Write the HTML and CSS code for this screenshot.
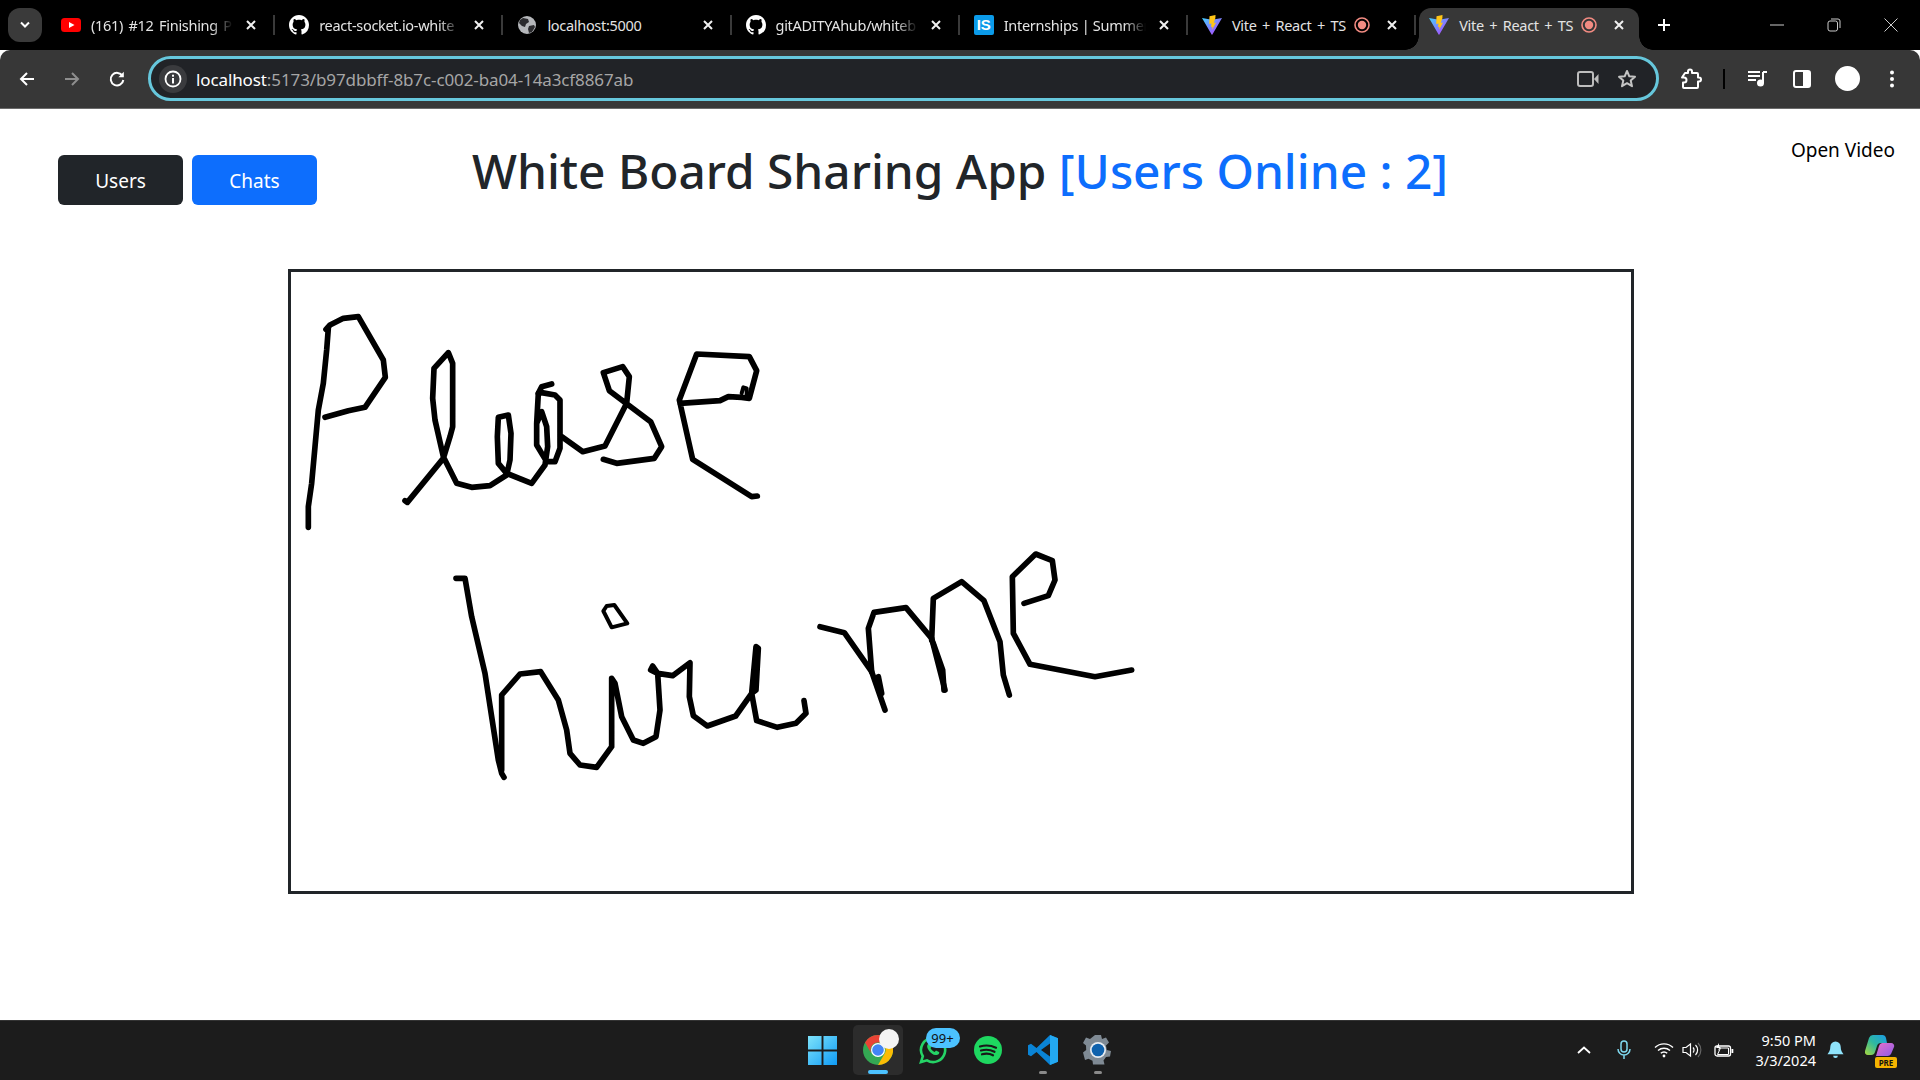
FILE: index.html
```html
<!DOCTYPE html>
<html lang="en">
<head>
<meta charset="utf-8">
<title>Vite + React + TS</title>
<link rel="stylesheet" href="styles.css">
</head>
<body>
<div class="tabstrip">
  <button class="tabsearch"><svg width="12" height="8" viewBox="0 0 12 8"><path d="M2 1.500 6 5.500 10 1.500" fill="none" stroke="#fff" stroke-width="2"/></svg></button>
  <div class="tab">
    <svg class="favicon" viewBox="0 0 20 20"><rect y="3" width="20" height="14" rx="3.500" fill="#f00"/><path d="M8 7l5.500 3L8 13z" fill="#fff"/></svg>
    <span class="tabtitle">(161) #12 Finishing Pr</span>
    <span class="tabclose"><svg viewBox="0 0 12 12"><path d="M2 2l8 8M10 2l-8 8"/></svg></span>
  </div>
  <div class="tab">
    <svg class="favicon" viewBox="0 0 16 16"><path fill="#fff" d="M8 0C3.580 0 0 3.580 0 8c0 3.540 2.290 6.530 5.470 7.590.4.070.55-.17.55-.38 0-.19-.01-.82-.01-1.490-2.010.37-2.530-.49-2.690-.94-.09-.23-.48-.94-.82-1.130-.28-.15-.68-.52-.01-.53.63-.01 1.080.58 1.230.82.720 1.210 1.870.87 2.330.66.070-.52.280-.87.510-1.070-1.780-.2-3.640-.89-3.640-3.950 0-.87.310-1.590.820-2.150-.08-.2-.36-1.020.08-2.120 0 0 .67-.21 2.200.820.640-.18 1.320-.27 2-.27s1.360.09 2 .27c1.530-1.040 2.200-.82 2.200-.82.440 1.100.160 1.920.080 2.120.510.560.820 1.270.820 2.150 0 3.070-1.870 3.750-3.650 3.950.290.250.540.730.540 1.480 0 1.070-.01 1.930-.01 2.200 0 .21.150.46.550.38A8.010 8.010 0 0 0 16 8c0-4.420-3.580-8-8-8z"/></svg>
    <span class="tabtitle">react-socket.io-white</span>
    <span class="tabclose"><svg viewBox="0 0 12 12"><path d="M2 2l8 8M10 2l-8 8"/></svg></span>
  </div>
  <div class="tab">
    <svg class="favicon" viewBox="0 0 20 20"><circle cx="10" cy="10" r="9" fill="#b5b7ba"/><path d="M6 3l5 1 1 3-3 2-1 3-3-1-3-3 1-3zM12 11l5-1 1 2-3 5-3 1-1-4z" fill="#2b2b2e"/></svg>
    <span class="tabtitle tabtitle-full">localhost:5000</span>
    <span class="tabclose"><svg viewBox="0 0 12 12"><path d="M2 2l8 8M10 2l-8 8"/></svg></span>
  </div>
  <div class="tab">
    <svg class="favicon" viewBox="0 0 16 16"><path fill="#fff" d="M8 0C3.580 0 0 3.580 0 8c0 3.540 2.290 6.530 5.470 7.590.4.070.55-.17.55-.38 0-.19-.01-.82-.01-1.490-2.010.37-2.530-.49-2.690-.94-.09-.23-.48-.94-.82-1.130-.28-.15-.68-.52-.01-.53.63-.01 1.080.58 1.230.82.720 1.210 1.870.87 2.330.66.070-.52.280-.87.510-1.070-1.780-.2-3.640-.89-3.640-3.950 0-.87.310-1.590.820-2.150-.08-.2-.36-1.020.08-2.120 0 0 .67-.21 2.200.820.640-.18 1.320-.27 2-.27s1.360.09 2 .27c1.530-1.040 2.200-.82 2.200-.82.440 1.100.160 1.920.080 2.120.510.560.820 1.270.820 2.150 0 3.070-1.870 3.750-3.650 3.950.290.250.540.730.540 1.480 0 1.070-.01 1.930-.01 2.200 0 .21.150.46.550.38A8.010 8.010 0 0 0 16 8c0-4.420-3.580-8-8-8z"/></svg>
    <span class="tabtitle">gitADITYAhub/whiteb</span>
    <span class="tabclose"><svg viewBox="0 0 12 12"><path d="M2 2l8 8M10 2l-8 8"/></svg></span>
  </div>
  <div class="tab">
    <span class="is-icon">IS</span>
    <span class="tabtitle tabtitle-tight">Internships | Summer</span>
    <span class="tabclose"><svg viewBox="0 0 12 12"><path d="M2 2l8 8M10 2l-8 8"/></svg></span>
  </div>
  <div class="tab">
    <svg class="favicon" viewBox="0 0 20 20"><defs><linearGradient id="vitea" x1="0" y1="0" x2="1" y2="1"><stop offset="0" stop-color="#41d1ff"/><stop offset="1" stop-color="#bd34fe"/></linearGradient></defs><path d="M0 3l10 1.800L20 3 10.400 19.500a.5.5 0 0 1-.8 0z" fill="url(#vitea)"/><path d="M13.500 0 7.500 1.300 7.200 9l2.300-.4-.5 3.300 1.400-.2-.3 3 4-7.200-2.300.5 1.600-5z" fill="#ffc517"/></svg>
    <span class="tabtitle tabtitle-full">Vite + React + TS</span>
    <svg class="rec" viewBox="0 0 16 16"><circle cx="8" cy="8" r="7" fill="none" stroke="#f28b82" stroke-width="1.600"/><circle cx="8" cy="8" r="4.200" fill="#f28b82"/></svg>
    <span class="tabclose"><svg viewBox="0 0 12 12"><path d="M2 2l8 8M10 2l-8 8"/></svg></span>
  </div>
  <div class="tab tab-active">
    <svg class="favicon" viewBox="0 0 20 20"><path d="M0 3l10 1.800L20 3 10.400 19.500a.5.5 0 0 1-.8 0z" fill="url(#vitea)"/><path d="M13.500 0 7.500 1.300 7.200 9l2.300-.4-.5 3.300 1.400-.2-.3 3 4-7.200-2.300.5 1.600-5z" fill="#ffc517"/></svg>
    <span class="tabtitle tabtitle-full">Vite + React + TS</span>
    <svg class="rec" viewBox="0 0 16 16"><circle cx="8" cy="8" r="7" fill="none" stroke="#f28b82" stroke-width="1.600"/><circle cx="8" cy="8" r="4.200" fill="#f28b82"/></svg>
    <span class="tabclose"><svg viewBox="0 0 12 12"><path d="M2 2l8 8M10 2l-8 8"/></svg></span>
  </div>
  <span class="newtab"><svg width="14" height="14" viewBox="0 0 14 14"><path d="M7 1v12M1 7h12" stroke="#fff" stroke-width="2"/></svg></span>
  <div class="winctrls">
    <svg class="winbtn" viewBox="0 0 14 14"><path d="M0 7h14" stroke="#ccc" stroke-width="1"/></svg>
    <svg class="winbtn" viewBox="0 0 14 14"><rect x="1" y="3" width="9.500" height="10" rx="2" fill="none" stroke="#ccc"/><path d="M4 1h7a2 2 0 0 1 2 2v7" fill="none" stroke="#ccc"/></svg>
    <svg class="winbtn" viewBox="0 0 14 14"><path d="M.5.500l13 13M13.500.500l-13 13" stroke="#ccc"/></svg>
  </div>
</div>

<div class="toolbar">
  <div class="navbtns">
    <svg class="tbicon" viewBox="0 0 18 18"><path d="M16 9H3M9 3 3 9l6 6" fill="none" stroke="#fff" stroke-width="2"/></svg>
    <svg class="tbicon" viewBox="0 0 18 18"><path d="M2 9h13M9 3l6 6-6 6" fill="none" stroke="#8e8e8e" stroke-width="2"/></svg>
    <svg class="tbicon" viewBox="0 0 18 18"><path d="M14.500 6A6.300 6.300 0 1 0 15.300 10" fill="none" stroke="#fff" stroke-width="2"/><path d="M15.800 1.800v5.400h-5.400z" fill="#fff"/></svg>
  </div>
  <div class="omnibox">
    <span class="infochip"><svg width="18" height="18" viewBox="0 0 18 18"><circle cx="9" cy="9" r="7.500" fill="none" stroke="#fff" stroke-width="1.800"/><rect x="8" y="8" width="2" height="5.500" fill="#fff"/><rect x="8" y="4.700" width="2" height="2" fill="#fff"/></svg></span>
    <span class="url"><span class="url-host">localhost</span>:5173/b97dbbff-8b7c-c002-ba04-14a3cf8867ab</span>
    <svg class="omni-cam" viewBox="0 0 22 18"><rect x="1" y="2" width="15" height="14" rx="2" fill="none" stroke="#bdbdbd" stroke-width="2"/><path d="M17 9l4.500-5v10z" fill="#bdbdbd"/></svg>
    <svg class="omni-star" viewBox="0 0 20 20"><path d="M10 2l2.300 5.300 5.700.5-4.300 3.800 1.300 5.600-5-3-5 3 1.300-5.600L2 7.800l5.700-.5z" fill="none" stroke="#c4c4c4" stroke-width="2" stroke-linejoin="round"/></svg>
  </div>
  <div class="tbright">
    <svg class="ext" viewBox="0 0 22 22"><path d="M8 3.500a2 2 0 0 1 4 0V5h5a1 1 0 0 1 1 1v3.500h1a2 2 0 0 1 0 4h-1V19a1 1 0 0 1-1 1H4a1 1 0 0 1-1-1v-4.500h1a2.500 2.500 0 0 0 0-5H2L5 5h3z" fill="none" stroke="#fff" stroke-width="2" stroke-linejoin="round"/></svg>
    <span class="tbsep"></span>
    <svg class="media" viewBox="0 0 20 18"><path d="M0 2h12M0 6h12M0 10h8" stroke="#fff" stroke-width="2"/><path d="M15 2h4M15 2v11" stroke="#fff" stroke-width="2" fill="none"/><circle cx="12.500" cy="13" r="3.500" fill="#fff"/></svg>
    <svg class="panel" viewBox="0 0 18 18"><rect x="1" y="1" width="16" height="16" rx="2" fill="none" stroke="#fff" stroke-width="2"/><rect x="10" y="1" width="7" height="16" fill="#fff"/></svg>
    <span class="avatar"></span>
    <svg class="kebab" viewBox="0 0 4 18"><circle cx="2" cy="2.500" r="2" fill="#fff"/><circle cx="2" cy="9" r="2" fill="#fff"/><circle cx="2" cy="15.500" r="2" fill="#fff"/></svg>
  </div>
</div>

<main class="page">
  <header class="apphead">
    <div class="btngroup">
      <button class="btn btn-dark">Users</button>
      <button class="btn btn-primary">Chats</button>
    </div>
    <h1 class="apptitle">White Board Sharing App <span class="online">[Users Online : 2]</span></h1>
    <div class="videolink">Open Video</div>
  </header>
  <div class="board">
    <svg class="drawing" viewBox="291 272 1340 619">
      <g transform="translate(280 260) scale(.33333)" class="ink">
        <polyline points="85,802 85,740 95,670 105,560 115,450 130,370 140,270 145,205"/>
        <polyline points="138,208 150,195 190,175 235,170 310,300 316,352 255,442 205,452 135,472"/>
        <polyline points="375,722 382,727 490,595 510,530 518,500 518,310 505,278 462,325 458,415 465,480 490,590 510,630 530,670 575,682 630,677 680,645 690,600 693,520 685,465 655,472 652,530 655,610 680,640 755,670 795,615 803,560 800,500 785,455 770,490 770,555 800,605 825,605 840,565 840,420 825,405 785,398 775,400 770,490"/>
        <polyline points="775,400 785,380 815,372"/>
        <polyline points="845,530 908,575 975,558 1040,430 1048,350 1028,320 970,338 988,392 1112,485 1145,560 1123,595 1010,610 970,598"/>
        <polyline points="1200,430 1320,422 1345,410 1385,412 1408,415 1430,332 1408,290 1250,282 1198,420 1238,598 1415,710 1432,708"/>
        <polyline class="ink-fine" points="1385,400 1390,382 1400,385 1400,405"/>
      </g>
      <g transform="translate(430 540) scale(.33333)" class="ink">
        <polyline points="78,115 105,115 125,230 165,400 205,660 215,700 222,712"/>
        <polyline points="215,690 215,465 270,402 332,395 385,480 410,570 420,640 450,675 500,682 545,620 545,415 555,430 575,530 610,600 640,610 678,590 690,510 683,400 662,390 668,378 683,400 728,407 780,368 778,470 790,527 832,558 917,528 965,460 978,320 985,325 978,450 965,460 980,542 1042,562 1098,550 1128,520 1122,482"/>
        <polygon class="ink-fine" points="520,213 530,198 553,195 592,250 545,262"/>
      </g>
      <g transform="translate(800 530) scale(.33333)" class="ink">
        <polyline points="60,290 133,308 215,425 255,540"/>
        <polyline points="235,440 245,490"/>
        <polyline points="215,425 205,295 222,247 318,233 395,325 435,480"/>
        <polyline points="395,330 400,205 485,155 552,212 600,335 610,435 628,495"/>
        <polyline points="400,340 428,420 432,480"/>
        <polyline points="672,220 745,197 765,150 757,92 707,72 637,140 640,310 690,403 885,440 995,420"/>
      </g>
    </svg>
  </div>
</main>

<footer class="taskbar">
  <div class="tb-spacer"></div>
  <div class="tb-apps">
    <span class="app app-win"><svg width="29" height="29" viewBox="0 0 30 30"><defs><linearGradient id="wing" x1="0" y1="0" x2="1" y2="1"><stop offset="0" stop-color="#7ee3fb"/><stop offset="1" stop-color="#0f9bf5"/></linearGradient></defs><path d="M0 0h14v14H0zM16 0h14v14H16zM0 16h14v14H0zM16 16h14v14H16z" fill="url(#wing)"/></svg></span>
    <span class="app app-chrome">
      <svg width="30" height="30" viewBox="0 0 30 30"><circle cx="15" cy="15" r="15" fill="#34a853"/><path d="M15 0a15 15 0 0 1 13 7.500H15a7.500 7.500 0 0 0-6.500 11.200L2 7.500A15 15 0 0 1 15 0z" fill="#ea4335"/><path d="M28 7.500A15 15 0 0 1 15 30l6.500-11.200A7.500 7.500 0 0 0 21.500 11z" fill="#fbbc04"/><circle cx="15" cy="15" r="7" fill="#fff"/><circle cx="15" cy="15" r="5.800" fill="#4285f4"/></svg>
      <span class="chrome-dot"></span>
      <span class="active-bar"></span>
    </span>
    <span class="app app-wa">
      <svg width="28" height="28" viewBox="0 0 28 28"><path d="M14 2a12 12 0 0 0-10.200 18.300L2 26l6-1.700A12 12 0 1 0 14 2z" fill="none" stroke="#25d366" stroke-width="2.600"/><path d="M9 8c-1 1-1.500 3 .5 6s5 5.500 8 5 3-2.500 2.500-3l-3-1.500-1.300 1.500c-2-.8-3.500-2.300-4.200-4l1.200-1.300L11 8z" fill="#25d366"/></svg>
      <span class="wa-badge">99+</span>
    </span>
    <span class="app app-spot"><svg width="28" height="28" viewBox="0 0 28 28"><circle cx="14" cy="14" r="14" fill="#1ed760"/><path d="M6 10.500c5-1.500 11-1.200 16 1.200M7 14.500c4.500-1.200 9.500-.8 13.500 1.300M8 18.300c4-1 8-.6 11 1" fill="none" stroke="#191919" stroke-width="2.200" stroke-linecap="round"/></svg></span>
    <span class="app app-code"><svg width="30" height="30" viewBox="0 0 30 30"><path d="M22 0 8.500 13 3 8.700 0 10.200v9.600l3 1.500 5.500-4.300L22 30l8-3.200V3.200zM22 8.500v13L13 15z" fill="#0a84d6" fill-rule="evenodd"/><path d="M22 0l8 3.200v23.600L22 30z" fill="#23a9f2"/></svg><span class="dot"></span></span>
    <span class="app app-set"><svg width="30" height="30" viewBox="0 0 30 30"><path d="M12 0h6l1 4 4-1.500 3 5-3 3 .8 4.500 4.200 1-1 5.500-4 .5-2.500 3.500 1 4H10l-.5-3.700-4-2-3.500 1.200L0 17.500l3.200-2.500-.2-4.500L0 8l3-5.500 4 1.500z" fill="#7f8a94"/><circle cx="15" cy="15" r="8" fill="#e8edf2"/><circle cx="15" cy="15" r="6.300" fill="#0f62ad"/></svg><span class="dot"></span></span>
  </div>
  <div class="tray">
    <svg class="t-chev" viewBox="0 0 14 8"><path d="M1 7l6-5.500L13 7" fill="none" stroke="#fff" stroke-width="1.800"/></svg>
    <svg class="t-mic" viewBox="0 0 14 20"><rect x="4" y="1" width="6" height="11" rx="3" fill="none" stroke="#7fd8ee" stroke-width="1.500"/><path d="M1 9a6 6 0 0 0 12 0M7 15v4" fill="none" stroke="#7fd8ee" stroke-width="1.500"/></svg>
    <svg class="t-wifi" viewBox="0 0 20 16"><path d="M1 5.500a13 13 0 0 1 18 0M4 8.500a9 9 0 0 1 12 0M6.800 11.300a4.500 4.500 0 0 1 6.400 0" fill="none" stroke="#fff" stroke-width="1.400"/><circle cx="10" cy="14" r="1.400" fill="#fff"/></svg>
    <svg class="t-vol" viewBox="0 0 20 16"><path d="M1 5.500h3L8.500 2v12L4 10.500H1z" fill="none" stroke="#fff" stroke-width="1.200"/><path d="M11 5.500a3.500 3.500 0 0 1 0 5M13.500 3a7 7 0 0 1 0 10" fill="none" stroke="#fff" stroke-width="1.200"/><path d="M16 1a10 10 0 0 1 0 14" fill="none" stroke="#666" stroke-width="1.200"/></svg>
    <svg class="t-bat" viewBox="0 0 20 14"><rect x="1" y="3" width="15.500" height="10" rx="2" fill="none" stroke="#fff" stroke-width="1.300"/><path d="M3.500 11.500 6.500 5h8v6.500z" fill="none" stroke="#fff"/><rect x="17.500" y="6" width="1.800" height="4" fill="#fff"/><path d="M5 0 2 5h3l-1 3 3-4H5z" fill="#fff"/></svg>
    <div class="clock"><div>9:50 PM</div><div>3/3/2024</div></div>
    <svg class="t-bell" viewBox="0 0 18 20"><path d="M9 1a5.500 5.500 0 0 0-5.500 5.500c0 4-1.500 6-3 8h17c-1.500-2-3-4-3-8A5.500 5.500 0 0 0 9 1z" fill="#8fe3fb"/><path d="M6.500 16a2.500 2.500 0 0 0 5 0z" fill="#8fe3fb"/></svg>
    <span class="copilot">
      <svg width="30" height="24" viewBox="0 0 30 24"><defs><linearGradient id="copa" x1="0" y1="1" x2="1" y2="0"><stop offset="0" stop-color="#a8d83c"/><stop offset=".5" stop-color="#2fb8a0"/><stop offset="1" stop-color="#1a9be8"/></linearGradient><linearGradient id="copb" x1="0" y1="0" x2="1" y2="1"><stop offset="0" stop-color="#e86fc8"/><stop offset="1" stop-color="#8d5de8"/></linearGradient></defs><path d="M9 0h8a4 4 0 0 1 4 3l1 5h-6a4 4 0 0 0-4 3l-2 6a4 4 0 0 1-4 3H3a3 3 0 0 1-3-4l4-13a5 5 0 0 1 5-3z" fill="url(#copa)"/><path d="M17 8h9a3 3 0 0 1 3 4l-3 7a4 4 0 0 1-4 2H11l3-10a4 4 0 0 1 3-3z" fill="url(#copb)"/></svg>
      <span class="pre">PRE</span>
    </span>
  </div>
</footer>
</body>
</html>
```
FILE: styles.css
```css
* { box-sizing: border-box; }
html, body { margin: 0; height: 100%; }
body {
  display: flex;
  flex-direction: column;
  height: 100vh;
  overflow: hidden;
  background: #fff;
  font-family: "Noto Sans", "Open Sans", sans-serif;
}
svg { display: block; flex: none; }

/* tab strip */
.tabstrip {
  height: 50px;
  background: #000;
  display: flex;
  align-items: flex-start;
  flex: none;
}
.tabsearch {
  width: 34px;
  height: 34px;
  margin: 8px 4px 0 8px;
  border: 0;
  padding: 0;
  border-radius: 12px;
  background: #3a3a3a;
  display: flex;
  align-items: center;
  justify-content: center;
}
.tab {
  width: 228.200px;
  height: 34px;
  margin-top: 8px;
  padding: 0 15px;
  display: flex;
  align-items: center;
  position: relative;
  color: #e3e3e3;
  font-size: 14.500px;
  letter-spacing: -.3px;
  word-spacing: 2px;
}
.tab::after {
  content: "";
  position: absolute;
  right: -1px;
  top: 7px;
  height: 20px;
  width: 2px;
  background: #3a3a3a;
}
.tab-active {
  width: 220px;
  margin-left: 4px;
  margin-right: 3px;
  height: 42px;
  padding: 0 12px 8px 10px;
  background: #373737;
  border-radius: 12px 12px 0 0;
}
.tab-active::after {
  right: -14px;
  top: auto;
  bottom: 0;
  width: 14px;
  height: 14px;
  background: radial-gradient(circle at 100% 0, #000 13.500px, #373737 14px);
}
.tab-active::before {
  content: "";
  position: absolute;
  left: -14px;
  bottom: 0;
  width: 14px;
  height: 14px;
  background: radial-gradient(circle at 0 0, #000 13.500px, #373737 14px);
}
.favicon { width: 20px; height: 20px; margin-right: 10px; }
.is-icon {
  width: 20px;
  height: 20px;
  margin-right: 10px;
  background: #0b9bea;
  border-radius: 2px;
  color: #fff;
  font-family: "Liberation Sans", sans-serif;
  font-weight: 700;
  font-size: 15px;
  letter-spacing: 0;
  line-height: 20px;
  text-align: center;
  flex: none;
}
.tabtitle {
  flex: 1;
  min-width: 0;
  white-space: nowrap;
  -webkit-mask-image: linear-gradient(to left, transparent 4px, #000 26px);
  mask-image: linear-gradient(to left, transparent 4px, #000 26px);
}
.tabtitle-full { -webkit-mask-image: none; mask-image: none; }
.tabtitle-tight { word-spacing: 0; }
.tabclose { width: 16px; height: 16px; padding: 2px; flex: none; margin-left: 6px; }
.tabclose svg { width: 12px; height: 12px; }
.tabclose path { stroke: #f0f0f0; stroke-width: 2; fill: none; }
.rec { width: 16px; height: 16px; margin-right: 8px; }
.newtab { margin: 18px 0 0 15px; }
.winctrls { margin-left: auto; display: flex; margin-top: 18px; margin-right: 22px; gap: 43px; }
.winbtn { width: 14px; height: 14px; }

/* toolbar */
.toolbar {
  height: 59px;
  flex: none;
  background: #373737;
  border-bottom: 1px solid #6b6b6b;
  border-radius: 10px 10px 0 0;
  display: flex;
  align-items: center;
  padding: 0 20px 1px 18px;
}
.navbtns { display: flex; gap: 27px; width: 132px; margin-right: -2px; }
.tbicon { width: 18px; height: 18px; }
.omnibox {
  width: 1511px;
  height: 45px;
  border: 3px solid #66c7dc;
  border-radius: 23px;
  background: #212327;
  display: flex;
  align-items: center;
  padding: 0 19px 0 8px;
}
.infochip {
  width: 28px;
  height: 28px;
  border-radius: 50%;
  background: #3a3b3e;
  display: flex;
  align-items: center;
  justify-content: center;
  margin-right: 9px;
}
.url { flex: 1; color: #a6a6a6; font-size: 17px; letter-spacing: -.11px; white-space: nowrap; margin-top: 1px; }
.url-host { color: #fff; }
.omni-cam { width: 22px; height: 18px; margin-right: 18px; }
.omni-star { width: 20px; height: 20px; }
.tbright { display: flex; align-items: center; margin-left: 21px; }
.ext { width: 22px; height: 22px; }
.tbsep { width: 2px; height: 20px; background: #000; margin: 0 23px 0 21px; }
.media { width: 20px; height: 18px; margin-right: 25px; }
.panel { width: 18px; height: 18px; margin-right: 24px; }
.avatar { width: 25px; height: 25px; border-radius: 50%; background: #fff; margin-right: 30px; }
.kebab { width: 4px; height: 18px; }

/* page */
.page { flex: 1; min-height: 0; background: #fff; }
.apphead {
  display: grid;
  grid-template-columns: 1fr auto 1fr;
  padding: 0 25px;
  height: 160px;
}
.btngroup { display: flex; gap: 9px; margin-top: 46px; padding-left: 33px; align-self: start; }
.btn {
  width: 125px;
  height: 50px;
  border: 0;
  padding: 2px 0 0;
  border-radius: 6px;
  color: #fff;
  font: 19px "Noto Sans", sans-serif;
}
.btn-dark { background: #212529; }
.btn-primary { background: #0d6efd; }
.apptitle {
  margin: 33px 0 0;
  color: #212529;
  font-size: 47.800px;
  font-weight: 500;
  line-height: 1.200;
  white-space: nowrap;
  justify-self: center;
}
.online { color: #0d6efd; }
.videolink { justify-self: end; margin-top: 28px; font-size: 19px; color: #000; line-height: 26px; }
.board {
  width: 1346px;
  height: 625px;
  margin-left: 288px;
  border: 3px solid #212529;
  background: #fff;
}
.drawing { width: 100%; height: 100%; }
.ink polyline, .ink polygon {
  fill: none;
  stroke: #000;
  stroke-width: 17;
  stroke-linecap: round;
  stroke-linejoin: round;
}
.ink .ink-fine { stroke-width: 12; }

/* taskbar */
.taskbar {
  height: 60px;
  flex: none;
  background: #1c1c1c;
  border-top: 1px solid #333;
  padding-bottom: 1px;
  display: grid;
  grid-template-columns: 1fr auto 1fr;
  align-items: center;
}
.tb-apps { display: flex; align-items: center; padding-left: 5px; }
.app {
  position: relative;
  width: 50px;
  height: 50px;
  margin-right: 5px;
  display: flex;
  align-items: center;
  justify-content: center;
}
.app-chrome { background: #2c2c2c; border-radius: 5px; }
.chrome-dot { position: absolute; left: 26px; top: 4px; width: 20px; height: 20px; border-radius: 50%; background: #f4f4f4; }
.active-bar { position: absolute; left: 15px; bottom: 1px; width: 20px; height: 4px; border-radius: 2px; background: #4cc2ff; }
.wa-badge {
  position: absolute;
  left: 18px;
  top: 3px;
  width: 34px;
  height: 20px;
  border-radius: 10px;
  background: #4cc2ff;
  color: #111;
  font-size: 13px;
  line-height: 20px;
  text-align: center;
}
.dot { position: absolute; left: 21px; bottom: 1px; width: 8px; height: 3px; border-radius: 2px; background: #8a8a8a; }
.tray { display: flex; align-items: center; justify-self: end; }
.t-chev { width: 14px; height: 8px; margin-right: 26px; }
.t-mic { width: 14px; height: 20px; margin-right: 23px; }
.t-wifi { width: 20px; height: 16px; margin-right: 8px; }
.t-vol { width: 20px; height: 16px; margin-right: 12px; }
.t-bat { width: 20px; height: 14px; margin-right: 21px; }
.clock { color: #fff; font-size: 14.500px; line-height: 20px; text-align: right; margin-right: 11px; white-space: nowrap; }
.t-bell { width: 17px; height: 20px; margin-right: 21px; }
.copilot { position: relative; width: 32px; height: 30px; margin-right: 23px; }
.pre {
  position: absolute;
  right: 0;
  bottom: -3px;
  width: 22px;
  height: 11px;
  border-radius: 2px;
  background: #f5b400;
  color: #111;
  font-size: 8px;
  font-weight: 700;
  line-height: 11px;
  text-align: center;
}
```
